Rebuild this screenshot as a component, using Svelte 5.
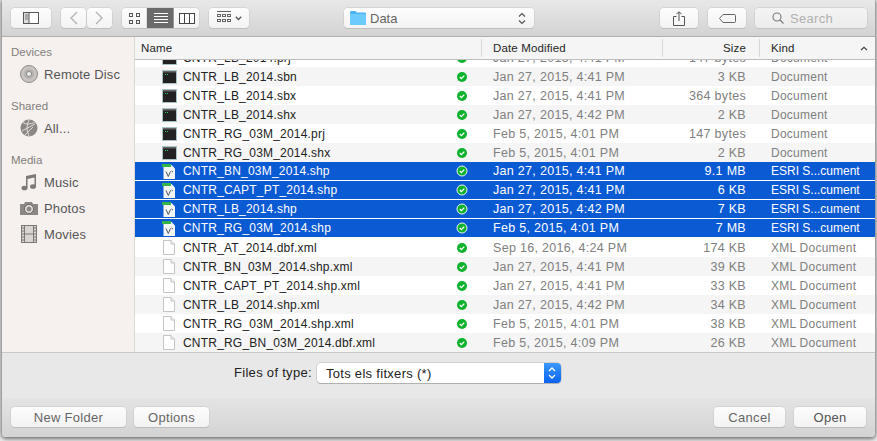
<script>
  const exec = 'exec', xml = 'xml', shp = 'shp';
  const rows = [
    ['CNTR_LB_2014.prj','Jan 27, 2015, 4:41 PM','147 bytes','Document',exec],
    ['CNTR_LB_2014.sbn','Jan 27, 2015, 4:41 PM','3 KB','Document',exec],
    ['CNTR_LB_2014.sbx','Jan 27, 2015, 4:41 PM','364 bytes','Document',exec],
    ['CNTR_LB_2014.shx','Jan 27, 2015, 4:42 PM','2 KB','Document',exec],
    ['CNTR_RG_03M_2014.prj','Feb 5, 2015, 4:01 PM','147 bytes','Document',exec],
    ['CNTR_RG_03M_2014.shx','Feb 5, 2015, 4:01 PM','2 KB','Document',exec],
    ['CNTR_BN_03M_2014.shp','Jan 27, 2015, 4:41 PM','9.1 MB','ESRI S...cument',shp],
    ['CNTR_CAPT_PT_2014.shp','Jan 27, 2015, 4:41 PM','6 KB','ESRI S...cument',shp],
    ['CNTR_LB_2014.shp','Jan 27, 2015, 4:42 PM','7 KB','ESRI S...cument',shp],
    ['CNTR_RG_03M_2014.shp','Feb 5, 2015, 4:01 PM','7 MB','ESRI S...cument',shp],
    ['CNTR_AT_2014.dbf.xml','Sep 16, 2016, 4:24 PM','174 KB','XML Document',xml],
    ['CNTR_BN_03M_2014.shp.xml','Jan 27, 2015, 4:41 PM','39 KB','XML Document',xml],
    ['CNTR_CAPT_PT_2014.shp.xml','Jan 27, 2015, 4:41 PM','33 KB','XML Document',xml],
    ['CNTR_LB_2014.shp.xml','Jan 27, 2015, 4:42 PM','34 KB','XML Document',xml],
    ['CNTR_RG_03M_2014.shp.xml','Feb 5, 2015, 4:01 PM','38 KB','XML Document',xml],
    ['CNTR_RG_BN_03M_2014.dbf.xml','Feb 5, 2015, 4:09 PM','26 KB','XML Document',xml]
  ];
</script>

<div class="page">
  <div class="window">
    <header class="toolbar">
      <button class="tb side" aria-label="Sidebar">
        <svg width="16" height="12" viewBox="0 0 16 12"><rect x=".5" y=".5" width="15" height="11" fill="#fff" stroke="#555"/><rect x="1" y="1" width="5" height="10" fill="#ddd"/><path d="M6 0v12" stroke="#555"/><path d="M2 3h3M2 5h3M2 7h3" stroke="#777"/></svg>
      </button>
      <div class="group nav">
        <button class="tb" aria-label="Back"><svg width="9" height="14" viewBox="0 0 9 14"><path d="M8 1 2 7l6 6" fill="none" stroke="#b4b4b4" stroke-width="1.4"/></svg></button>
        <button class="tb" aria-label="Forward"><svg width="9" height="14" viewBox="0 0 9 14"><path d="m1 1 6 6-6 6" fill="none" stroke="#b4b4b4" stroke-width="1.4"/></svg></button>
      </div>
      <div class="group views">
        <button class="tb" aria-label="Icons"><svg width="11" height="11" viewBox="0 0 11 11" fill="none" stroke="#555"><rect x=".5" y=".5" width="3" height="3"/><rect x="7.5" y=".5" width="3" height="3"/><rect x=".5" y="7.5" width="3" height="3"/><rect x="7.5" y="7.5" width="3" height="3"/></svg></button>
        <button class="tb on" aria-label="List"><svg width="14" height="11" viewBox="0 0 14 11" stroke="#fff"><path d="M0 .5h14M0 3.5h14M0 6.5h14M0 9.5h14"/></svg></button>
        <button class="tb" aria-label="Columns"><svg width="16" height="11" viewBox="0 0 16 11" fill="#fff" stroke="#444"><rect x=".5" y=".5" width="15" height="10"/><path d="M5.500 0v11M10.500 0v11"/></svg></button>
      </div>
      <button class="tb arrange" aria-label="Arrange">
        <svg width="14" height="14" viewBox="0 0 14 14" fill="none" stroke="#666"><path d="M0 .5h14"/><rect x=".5" y="3.5" width="3" height="2"/><rect x="5.5" y="3.5" width="3" height="2"/><rect x="10.5" y="3.5" width="3" height="2"/><rect x=".5" y="8.5" width="3" height="2"/><rect x="5.5" y="8.5" width="3" height="2"/><rect x="10.5" y="8.5" width="3" height="2"/></svg>
        <svg width="7" height="5" viewBox="0 0 7 5"><path d="m.8.8 2.700 2.700L6.200.8" fill="none" stroke="#555" stroke-width="1.300"/></svg>
      </button>
      <div class="path">
        <svg width="16" height="14" viewBox="0 0 16 14"><path d="M0 1.500Q0 0 1 0h4.500l1.500 1.500h8q1 0 1 1V13q0 1-1 1H1q-1 0-1-1z" fill="#4db5f3"/><path d="M0 3h16v10q0 1-1 1H1q-1 0-1-1z" fill="#6ccbfb"/></svg>
        <span>Data</span>
        <svg class="updown" width="8" height="13" viewBox="0 0 8 13" fill="none" stroke="#555" stroke-width="1.200"><path d="m1 4.500 3-3 3 3M1 8.500l3 3 3-3"/></svg>
      </div>
      <button class="tb share" aria-label="Share"><svg width="12" height="15" viewBox="0 0 12 15" fill="none" stroke="#555"><path d="M3.500 5.500h-3v9h11v-9h-3M6 10V1M3.500 3 6 .8 8.500 3"/></svg></button>
      <button class="tb tag" aria-label="Tags"><svg width="17" height="9" viewBox="0 0 17 9" fill="none" stroke="#666"><path d="M4 .5h11.500q1 0 1 1v6q0 1-1 1H4L.5 4.500z"/></svg></button>
      <div class="search">
        <svg width="12" height="12" viewBox="0 0 12 12" fill="none" stroke="#777" stroke-width="1.100"><circle cx="5" cy="5" r="4"/><path d="m8 8 3.500 3.500"/></svg>
        <span>Search</span>
      </div>
    </header>

    <div class="browser">
      <aside class="sidebar">
        <h4>Devices</h4>
        <div class="place">
          <svg width="18" height="18" viewBox="0 0 18 18"><circle cx="9" cy="9" r="8.500" fill="#c8c4c2" stroke="#8f8b89"/><circle cx="9" cy="9" r="5" fill="#b5b1af"/><circle cx="9" cy="9" r="2.500" fill="#eee" stroke="#888"/></svg>
          <span>Remote Disc</span>
        </div>
        <h4 class="gap">Shared</h4>
        <div class="place">
          <svg width="18" height="18" viewBox="0 0 18 18"><circle cx="9" cy="9" r="8.500" fill="#8b8886"/><path d="M3 3.500q3 2 6 1.500t5.500-1.500M9 1q-4 8 0 16M2 12l13-7M5 16l8-8" fill="none" stroke="#e6e3e1" stroke-width=".9"/></svg>
          <span>All...</span>
        </div>
        <h4 class="gap">Media</h4>
        <div class="place">
          <svg width="18" height="18" viewBox="0 0 18 18" fill="#7c7977"><path d="M6 3 16 1v12h-1.500V4.500L7.500 6v9H6z"/><ellipse cx="4.500" cy="15" rx="3" ry="2.300"/><ellipse cx="13" cy="13.500" rx="3" ry="2.300"/></svg>
          <span>Music</span>
        </div>
        <div class="place p2">
          <svg width="18" height="14" viewBox="0 0 18 14"><path d="M0 3h4l1-2h7l1 2h5v11H0z" fill="#8a8785"/><circle cx="9" cy="8" r="4.500" fill="#e6e3e1" stroke="#666"/><circle cx="9" cy="8" r="2.500" fill="#8b8886"/></svg>
          <span>Photos</span>
        </div>
        <div class="place p3">
          <svg width="16" height="18" viewBox="0 0 16 18"><rect x=".5" y=".5" width="15" height="17" fill="#d8d5d3" stroke="#7c7977"/><path d="M3.500 0v18M12.500 0v18M3.500 9h9" stroke="#7c7977"/><path d="M1 3h2M1 6h2M1 9h2M1 12h2M1 15h2M13 3h2M13 6h2M13 9h2M13 12h2M13 15h2" stroke="#7c7977"/></svg>
          <span>Movies</span>
        </div>
      </aside>

      <section class="list">
        <div class="cols">
          <div class="c-name">Name</div>
          <div class="c-date">Date Modified</div>
          <div class="c-size">Size</div>
          <div class="c-kind">Kind <svg width="8" height="5" viewBox="0 0 8 5"><path d="M1 4 4 1.200 7 4" fill="none" stroke="#444" stroke-width="1.200"/></svg></div>
        </div>
        <div class="scroller">
          <div class="rows">
            {#each rows as r, i}
              <div class="row" class:alt={i % 2 === 1} class:sel={r[4] === shp}>
                <div class="name">
                  <span class="ico">
                    {#if r[4] === exec}
                      <svg width="15" height="14" viewBox="0 0 15 14"><rect x=".5" y=".5" width="14" height="13" fill="#222" stroke="#a9c2c4"/><rect x="1" y="1" width="13" height="1.500" fill="#666"/><path d="M3 4.500h3" stroke="#3c6" stroke-dasharray="1 1"/></svg>
                    {:else if r[4] === xml}
                      <svg width="12" height="15" viewBox="0 0 12 15"><path d="M.5.500h7.500l3.500 3.500v10.500H.5z" fill="#fff" stroke="#c4c4c4"/><path d="M8 .5v3.500h3.500" fill="#eee" stroke="#c4c4c4"/></svg>
                    {:else}
                      <svg width="14" height="15" viewBox="0 0 14 15"><path d="M1.500 1h8l3.500 3.500V15h-11.500z" fill="#f4f6f4"/><path d="M4 7.500 6.300 12.500 8.500 7.500M9.500 7l1.500 1" fill="none" stroke="#456" stroke-width="1"/><rect x="0" y="0" width="9" height="3" fill="#33b44a"/></svg>
                    {/if}
                  </span>
                  <span class="fn">{r[0]}</span>
                </div>
                <div class="st">
                  <svg width="12" height="12" viewBox="0 0 12 12"><circle cx="6" cy="6" r="5" fill="#0cb22c" stroke={r[4] === shp ? '#fff' : 'none'} stroke-width=".9"/><path d="m3.800 6 1.600 1.600 2.900-3" fill="none" stroke="#fff" stroke-width="1.300"/></svg>
                </div>
                <div class="date">{r[1]}</div>
                <div class="size">{r[2]}</div>
                <div class="kind">{r[3]}</div>
              </div>
            {/each}
          </div>
        </div>
      </section>
    </div>

    <div class="accessory">
      <label for="ft">Files of type:</label>
      <div class="select" id="ft">
        <span>Tots els fitxers (*)</span>
        <div class="stepper"><svg width="8" height="14" viewBox="0 0 8 14" fill="none" stroke="#fff" stroke-width="1.300"><path d="m1 5 3-3 3 3M1 9l3 3 3-3"/></svg></div>
      </div>
    </div>

    <footer class="actions">
      <button class="btn nf">New Folder</button>
      <button class="btn op">Options</button>
      <div class="spacer"></div>
      <button class="btn ca">Cancel</button>
      <button class="btn ok">Open</button>
    </footer>
  </div>
</div>

<style>
  :global(body) { margin: 0; background: #fff; }
  .page {
    width: 877px; height: 441px; box-sizing: border-box; padding: 0 2px 4px;
    background: #ededed;
    font-family: "Liberation Sans", Arial, sans-serif; overflow: hidden;
  }
  .window {
    height: 437px; display: flex; flex-direction: column; border-radius: 0 0 4px 4px;
    box-shadow: 0 1px 4px 1px rgba(0,0,0,.55); background: #e8e8e8; overflow: hidden;
  }
  button { font-family: inherit; padding: 0; margin: 0; }
  .toolbar {
    height: 37px; flex: none; box-sizing: border-box; display: flex; align-items: flex-start;
    padding: 8px 0 0 9px; background: linear-gradient(#e8e8e8, #d3d3d3);
    border-bottom: 1px solid #b0b0b0;
  }
  .tb {
    height: 20px; box-sizing: border-box; border: 0; background: linear-gradient(#fdfdfd, #f3f3f3);
    box-shadow: 0 0 0 .5px #c6c6c6, 0 1px 0 #b8b8b8; border-radius: 4px;
    display: flex; align-items: center; justify-content: center;
  }
  .side { width: 40px; }
  .group { display: flex; gap: 1px; }
  .nav { margin-left: 10px; }
  .nav .tb { width: 25px; }
  .views { margin-left: 10px; gap: 0; }
  .views .tb { width: 25px; border-radius: 4px 0 0 4px; }
  .views .on { background: #6b6b6b; border-radius: 0; width: 27px; }
  .views .tb:last-child { border-radius: 0 4px 4px 0; }
  .arrange { width: 40px; margin-left: 10px; gap: 4px; }
  .path {
    margin-left: 95px; width: 190px; height: 20px; box-sizing: border-box; background: linear-gradient(#fdfdfd, #f3f3f3);
    box-shadow: 0 0 0 .5px #c6c6c6, 0 1px 0 #b8b8b8; border-radius: 4px; display: flex; align-items: center;
    padding: 0 8px 0 6px; font-size: 13px; color: #666; gap: 4px;
  }
  .path span { flex: 1; }
  .share { width: 38px; margin-left: 126px; }
  .tag { width: 38px; margin-left: 10px; }
  .search {
    margin-left: 9px; width: 112px; height: 20px; box-sizing: border-box; background: linear-gradient(#f4f4f4, #ececec);
    box-shadow: 0 0 0 .5px #c6c6c6, 0 1px 0 #c0c0c0; border-radius: 4px; display: flex; align-items: center;
    padding-left: 17px; gap: 6px; font-size: 13px; color: #b0b0b0; letter-spacing: .3px;
  }
  .browser { height: 316px; flex: none; display: flex; border-bottom: 1px solid #c8c8c8; box-sizing: border-box; }
  .sidebar {
    width: 133px; flex: none; box-sizing: border-box; background: #f6f1ee; border-right: 1px solid #dcd8d6;
    padding: 9px 0 0 9px; color: #555;
  }
  h4 { margin: 0; font-size: 11.500px; font-weight: 400; color: #827e7c; height: 13px; line-height: 13px; }
  h4.gap { margin-top: 13px; }
  .place { display: flex; align-items: center; gap: 6px; height: 26px; padding-left: 9px; margin-top: 2px; font-size: 13px; letter-spacing: .15px; }
  .place svg { width: 18px; flex: none; }
  .p2, .p3 { margin-top: 0; }
  .list { flex: 1; min-width: 0; display: flex; flex-direction: column; background: #fff; }
  .cols {
    height: 23px; flex: none; box-sizing: border-box; display: flex; align-items: center; background: #f5f5f5;
    border-bottom: 1px solid #bdbdbd; font-size: 11.500px; letter-spacing: .15px; color: #262626;
  }
  .cols > div { height: 18px; display: flex; align-items: center; box-sizing: border-box; }
  .c-name { width: 347px; padding-left: 6px; border-right: 1px solid #d8d8d8; }
  .c-date { width: 181px; padding-left: 11px; border-right: 1px solid #d8d8d8; }
  .c-size { width: 97px; justify-content: flex-end; padding-right: 13px; border-right: 1px solid #d8d8d8; }
  .c-kind { flex: 1; padding-left: 11px; justify-content: space-between; padding-right: 7px; }
  .scroller { flex: 1; overflow: hidden; min-height: 0; }
  .rows { margin-top: -12px; }
  .row {
    height: 19px; box-sizing: border-box; display: flex; align-items: center; background: #fff;
    font-size: 12.500px; letter-spacing: .3px; color: #808080;
  }
  .row.alt { background: #f5f5f5; }
  .row.sel { background: #0a5ad4; color: #fff; border-bottom: 1px solid #fff; }
  .name { width: 321px; display: flex; align-items: center; color: #222; flex: none; font-size: 12px; letter-spacing: .2px; }
  .sel .name { color: #fff; }
  .ico { width: 48px; display: flex; justify-content: center; box-sizing: border-box; flex: none; padding: 0 6px 0 26px; }
  .ico svg { flex: none; }
  .fn { white-space: nowrap; }
  .st { width: 12px; flex: none; display: flex; justify-content: center; }
  .date { width: 195px; padding-left: 25px; box-sizing: border-box; flex: none; white-space: nowrap; }
  .size { width: 97px; text-align: right; padding-right: 14px; box-sizing: border-box; flex: none; }
  .kind { padding-left: 11px; white-space: nowrap; font-size: 12px; letter-spacing: .25px; }
  .sel .kind { letter-spacing: 0; }
  .accessory {
    height: 45px; flex: none; box-sizing: border-box; display: flex; align-items: flex-start;
    padding: 10px 0 0 232px; background: #e8e8e8; font-size: 13px; letter-spacing: .3px; color: #222; gap: 5px;
  }
  label { line-height: 20px; }
  .select {
    width: 244px; height: 20px; background: #fff; border-radius: 4px; box-shadow: 0 0 0 .5px #b8b8b8, 0 1px 0 #aaa;
    display: flex; align-items: center; justify-content: space-between; padding-left: 9px; box-sizing: border-box; overflow: hidden;
  }
  .stepper { width: 17px; height: 20px; background: linear-gradient(#3b99fc, #0a62f0); display: flex; align-items: center; justify-content: center; }
  .actions {
    flex: 1; display: flex; align-items: flex-start; padding: 9px 9px 0; box-sizing: border-box;
    background: linear-gradient(#e4e4e4, #d3d3d3);
  }
  .btn {
    height: 20px; border: 0; border-radius: 4px; background: linear-gradient(#fcfcfc, #f2f2f2);
    box-shadow: 0 0 0 .5px #c6c6c6, 0 1px 0 #b5b5b5; font-size: 13px; letter-spacing: .3px; color: #666;
  }
  .nf { width: 115px; }
  .op { width: 75px; margin-left: 8px; }
  .spacer { flex: 1; }
  .ca { width: 71px; }
  .ok { width: 72px; margin-left: 9px; color: #555; }
</style>
